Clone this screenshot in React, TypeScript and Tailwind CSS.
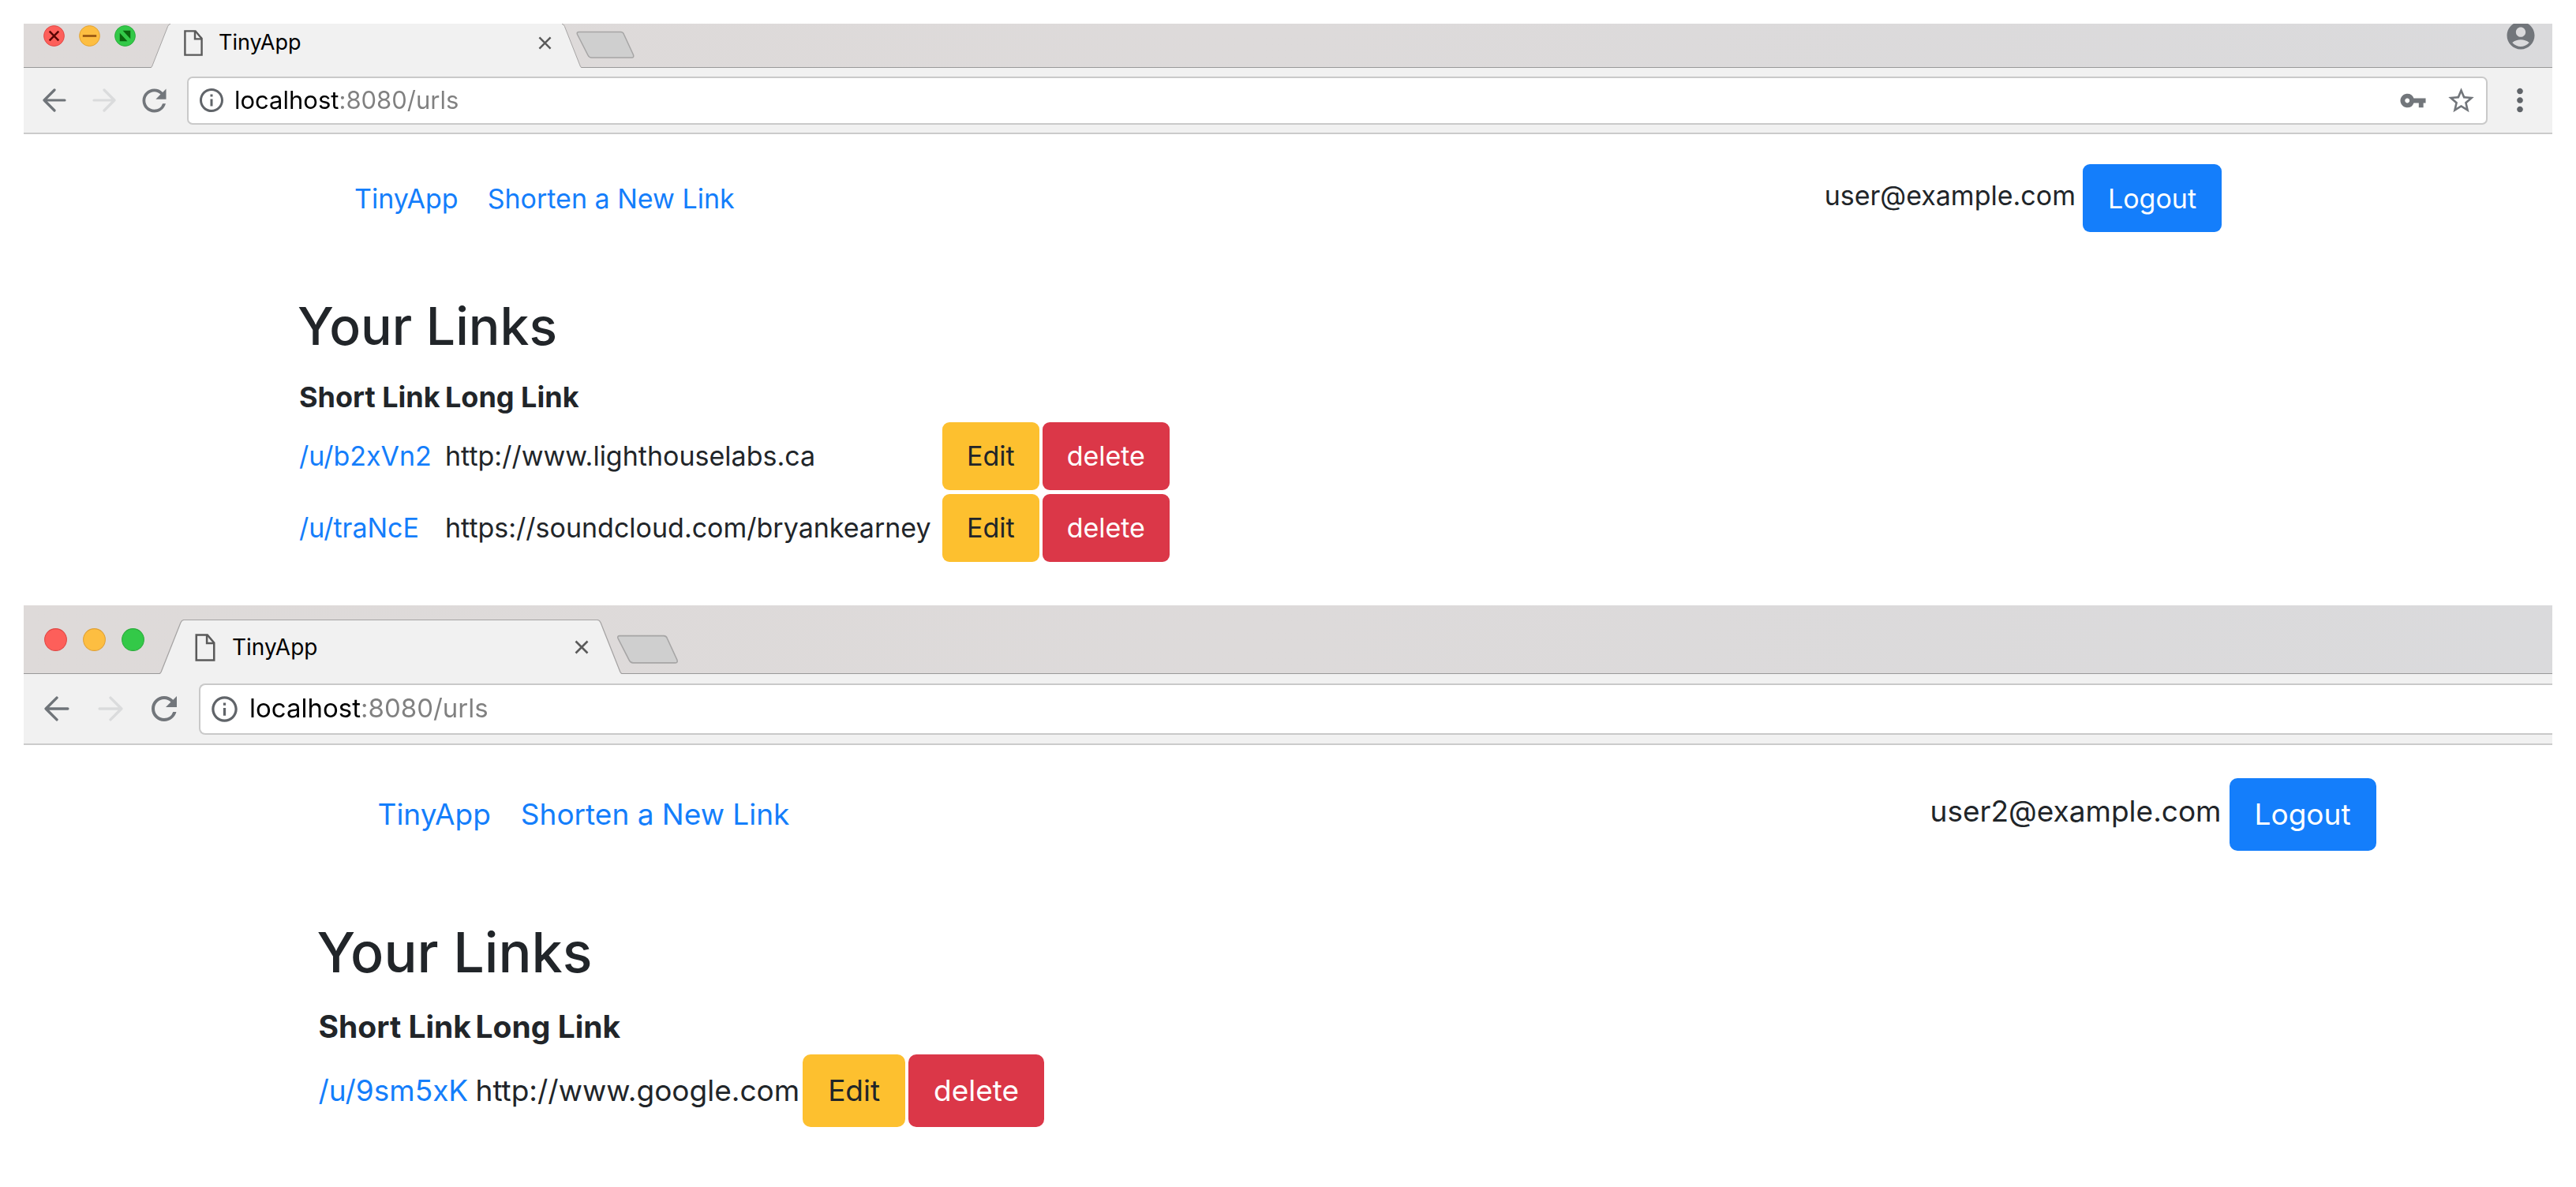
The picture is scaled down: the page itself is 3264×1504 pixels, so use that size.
import { MdAccountCircle, MdInfoOutline, MdMoreVert, MdRefresh, MdStarBorder, MdVpnKey } from "react-icons/md";

type Row = { short: string; long: string };

type Sizes = {
  strip: string;
  lights: string;
  light: string;
  tab: string;
  slope: string;
  tabBody: string;
  fileIcon: string;
  tabTitle: string;
  closeIcon: string;
  newTab: string;
  toolbar: string;
  navButtons: string;
  arrow: string;
  reload: string;
  omnibox: string;
  info: string;
  url: string;
  page: string;
  container: string;
  nav: string;
  links: string;
  user: string;
  logout: string;
  heading: string;
  table: string;
  th: string;
  shortColumn: string;
  longColumn: string;
  td: string;
  button: string;
};

const large: Sizes = {
  strip: "h-[56px]",
  lights: "gap-[18px] pl-[25px] pt-[2px] pr-[19px]",
  light: "size-[27px]",
  tab: "h-[56px]",
  slope: "w-[25px]",
  tabBody: "w-[496px] pl-[17px] pr-[13px] pb-[7px]",
  fileIcon: "h-[33px] w-[24px]",
  tabTitle: "ml-[20px] text-[27px]",
  closeIcon: "size-[17px]",
  newTab: "mt-[9px] -ml-[8px] h-[36px] w-[76px]",
  toolbar: "h-[84px] pl-[24px]",
  navButtons: "gap-[33px]",
  arrow: "size-[30px]",
  reload: "size-[45px] -mx-[7px]",
  omnibox: "h-[61px] ml-[26px] pl-[11px] rounded-[7px]",
  info: "size-[36px]",
  url: "ml-[11px] text-[31px] bg-[linear-gradient(to_right,#000_134px,#808080_134px)]",
  page: "pt-[38px] pb-[53px]",
  container: "max-w-[2578px] px-[34px]",
  nav: "px-[72px] mb-[76px] text-[34px]",
  links: "gap-[37px]",
  user: "gap-[9px]",
  logout: "h-[86px] px-[32px] rounded-[9px]",
  heading: "text-[66px] leading-[87px] mb-[16px]",
  table: "text-[34px]",
  th: "h-[59px] px-[2px] text-[36px]",
  shortColumn: "min-w-[185px]",
  longColumn: "min-w-[630px]",
  td: "h-[91px] px-[2px]",
  button: "h-[86px] px-[31px] rounded-[9px]",
};

const larger: Sizes = {
  strip: "h-[87px]",
  lights: "gap-[20px] pl-[26px] pt-[29px] pr-[19px]",
  light: "size-[29px]",
  tab: "h-[69px]",
  slope: "w-[31px]",
  tabBody: "w-[524px] pl-[14px] pr-[11px]",
  fileIcon: "h-[35px] w-[26px]",
  tabTitle: "ml-[21px] text-[28px]",
  closeIcon: "size-[18px]",
  newTab: "mt-[37px] -ml-[8px] h-[38px] w-[81px]",
  toolbar: "h-[90px] pl-[26px]",
  navButtons: "gap-[36px]",
  arrow: "size-[32px]",
  reload: "size-[48px] -mx-[8px]",
  omnibox: "h-[65px] ml-[28px] pl-[11px] rounded-l-[8px] border-r-0",
  info: "size-[39px]",
  url: "ml-[12px] text-[33px] bg-[linear-gradient(to_right,#000_143px,#808080_143px)]",
  page: "w-[3434px] pt-[42px] pb-[44px]",
  container: "max-w-[2763px] px-[36px]",
  nav: "pl-[77px] pr-[82px] mb-[82px] text-[37px]",
  links: "gap-[38px]",
  user: "gap-[10px]",
  logout: "h-[92px] px-[32px] rounded-[10px]",
  heading: "text-[70px] leading-[93px] mb-[17px]",
  table: "text-[37px]",
  th: "h-[63px] px-[2px] text-[39px]",
  shortColumn: "min-w-[199px]",
  longColumn: "min-w-[412px]",
  td: "h-[97px] px-[2px]",
  button: "h-[92px] px-[32px] rounded-[10px]",
};

function FileIcon({ className }: { className: string }) {
  return (
    <svg viewBox="0 0 24 33" className={className} fill="none" stroke="#5a5a5a" strokeWidth="2.4" aria-hidden="true">
      <path d="M1.4 1.4h13.2l8 9.4v20.8H1.4z" />
      <path d="M14 1.4v10h8.6" />
    </svg>
  );
}

function CloseIcon({ className }: { className: string }) {
  return (
    <svg viewBox="0 0 18 18" className={className} stroke="#5a5a5a" strokeWidth="2.6" aria-hidden="true">
      <path d="M1.5 1.5l15 15M16.5 1.5l-15 15" />
    </svg>
  );
}

function Arrow({ className, forward }: { className: string; forward?: boolean }) {
  return (
    <svg
      viewBox="0 0 30 30"
      className={className}
      fill="none"
      stroke={forward ? "#dadbdc" : "#6f7479"}
      strokeWidth="3.2"
      strokeLinecap="round"
      strokeLinejoin="round"
      aria-hidden="true"
    >
      {forward ? <path d="M2 15h26M15 2l13 13-13 13" /> : <path d="M28 15H2M15 2L2 15l13 13" />}
    </svg>
  );
}

function TrafficLights({ s, marked }: { s: Sizes; marked?: boolean }) {
  return (
    <div className={`flex shrink-0 items-start ${s.lights}`}>
      <button aria-label="Close window" className={s.light}>
        <svg viewBox="0 0 28 28" aria-hidden="true">
          <circle cx="14" cy="14" r="13.4" fill="#fd5f5a" stroke="#e04845" />
          {marked && <path d="M8 8l12 12M20 8L8 20" stroke="#5a0503" strokeWidth="2.6" />}
        </svg>
      </button>
      <button aria-label="Minimize window" className={s.light}>
        <svg viewBox="0 0 28 28" aria-hidden="true">
          <circle cx="14" cy="14" r="13.4" fill="#fdbe41" stroke="#e0a135" />
          {marked && <path d="M5 14h18" stroke="#985712" strokeWidth="2.8" />}
        </svg>
      </button>
      <button aria-label="Zoom window" className={s.light}>
        <svg viewBox="0 0 28 28" aria-hidden="true">
          <circle cx="14" cy="14" r="13.4" fill="#33c948" stroke="#2aad3b" />
          {marked && <path d="M11 7h10v11zM7 10v11h10z" fill="#0b640e" />}
        </svg>
      </button>
    </div>
  );
}

function Browser({
  s,
  email,
  rows,
  full,
}: {
  s: Sizes;
  email: string;
  rows: Row[];
  full?: boolean;
}) {
  const tabTop = full ? "" : "border-t border-[#a5a3a3]";
  return (
    <section className="overflow-hidden">
      <header>
        <div
          className={`flex items-start overflow-hidden bg-linear-to-r from-[#dedad9] via-[#dddada] to-[#dadadc] shadow-[inset_0_-1px_0_#999] ${s.strip}`}
        >
          <TrafficLights s={s} marked={full} />
          <div className={`flex shrink-0 self-end ${s.tab}`}>
            <svg viewBox="0 0 30 68" preserveAspectRatio="none" className={`h-full shrink-0 ${s.slope}`} aria-hidden="true">
              <path d="M0 68Q2 67.5 3 63L26 4Q27.5 .5 30 .5V68z" fill="#f1f1f1" />
              <path d="M0 67.5Q2 67 3 63L26 4Q27.5 .5 30 .5" fill="none" stroke="#a5a3a3" strokeWidth="1.2" />
            </svg>
            <div className={`flex items-center bg-[#f1f1f1] ${tabTop} ${s.tabBody}`}>
              <FileIcon className={s.fileIcon} />
              <span className={`text-black ${s.tabTitle}`}>TinyApp</span>
              <button aria-label="Close tab" className="ml-auto">
                <CloseIcon className={s.closeIcon} />
              </button>
            </div>
            <svg viewBox="0 0 30 68" preserveAspectRatio="none" className={`h-full shrink-0 ${s.slope}`} aria-hidden="true">
              <path d="M30 68Q28 67.5 27 63L4 4Q2.5 .5 0 .5V68z" fill="#f1f1f1" />
              <path d="M30 67.5Q28 67 27 63L4 4Q2.5 .5 0 .5" fill="none" stroke="#a5a3a3" strokeWidth="1.2" />
            </svg>
          </div>
          <button aria-label="New tab" className={`shrink-0 ${s.newTab}`}>
            <svg viewBox="0 0 75 36" className="size-full" aria-hidden="true">
              <path
                d="M4 1.5h53q3 0 4 3l12 26q1 3.5-2 3.5H20q-3 0-4.5-3L2 4.5Q1 1.5 4 1.5z"
                fill="#cfcfcf"
                stroke="#a6a5a5"
                strokeWidth="1.5"
              />
            </svg>
          </button>
          {full && (
            <button aria-label="Profile" className="ml-auto -mt-[6px] mr-[19px] shrink-0">
              <MdAccountCircle className="size-[42px] text-[#72767b]" />
            </button>
          )}
        </div>
        <div className={`flex items-center border-b-2 border-[#cbcbcb] bg-[#f1f1f1] ${s.toolbar}`}>
          <div className={`flex items-center ${s.navButtons}`}>
            <button aria-label="Back">
              <Arrow className={s.arrow} />
            </button>
            <button aria-label="Forward">
              <Arrow className={s.arrow} forward />
            </button>
            <button aria-label="Reload">
              <MdRefresh className={`text-[#72767b] ${s.reload}`} />
            </button>
          </div>
          <div className={`flex flex-1 items-center border-2 border-[#c9c9c9] bg-white ${s.omnibox}`}>
            <MdInfoOutline className={`shrink-0 text-[#606469] ${s.info}`} />
            <input
              aria-label="Address"
              defaultValue="localhost:8080/urls"
              className={`min-w-0 flex-1 bg-clip-text text-transparent outline-none ${s.url}`}
            />
            {full && (
              <div className="flex items-center gap-[24px] pr-[12px]">
                <button aria-label="Saved passwords">
                  <MdVpnKey className="size-[35px] text-[#72767b]" />
                </button>
                <button aria-label="Bookmark this page">
                  <MdStarBorder className="size-[39px] text-[#72767b]" />
                </button>
              </div>
            )}
          </div>
          {full && (
            <button aria-label="Menu" className="mx-[18px]">
              <MdMoreVert className="size-[46px] text-[#606469]" />
            </button>
          )}
        </div>
      </header>
      <div className={s.page}>
        <div className={`mx-auto ${s.container}`}>
          <nav className={`flex items-center justify-between ${s.nav}`}>
            <div className={`flex text-[#147efb] ${s.links}`}>
              <a href="#home">TinyApp</a>
              <a href="#new">Shorten a New Link</a>
            </div>
            <div className={`flex items-center ${s.user}`}>
              <span className="pb-2">{email}</span>
              <button className={`bg-[#147efb] text-white ${s.logout}`}>Logout</button>
            </div>
          </nav>
          <h1 className={`font-medium ${s.heading}`}>Your Links</h1>
          <table className={`border-collapse ${s.table}`}>
            <thead>
              <tr className="text-left whitespace-nowrap">
                <th className={`${s.th} ${s.shortColumn}`}>Short Link</th>
                <th className={`${s.th} ${s.longColumn}`}>Long Link</th>
                <td />
                <td />
              </tr>
            </thead>
            <tbody>
              {rows.map((row) => (
                <tr key={row.short}>
                  <td className={s.td}>
                    <a href={row.short} className="text-[#147efb]">
                      {row.short}
                    </a>
                  </td>
                  <td className={s.td}>{row.long}</td>
                  <td className={s.td}>
                    <button className={`block bg-[#fdc02f] ${s.button}`}>Edit</button>
                  </td>
                  <td className={s.td}>
                    <button className={`block bg-[#db3748] text-white ${s.button}`}>delete</button>
                  </td>
                </tr>
              ))}
            </tbody>
          </table>
        </div>
      </div>
    </section>
  );
}

export default function App() {
  return (
    <main className="bg-white p-[30px] font-['Inter',sans-serif] text-[#212529]">
      <Browser
        s={large}
        full
        email="user@example.com"
        rows={[
          { short: "/u/b2xVn2", long: "http://www.lighthouselabs.ca" },
          { short: "/u/traNcE", long: "https://soundcloud.com/bryankearney" },
        ]}
      />
      <Browser s={larger} email="user2@example.com" rows={[{ short: "/u/9sm5xK", long: "http://www.google.com" }]} />
    </main>
  );
}
